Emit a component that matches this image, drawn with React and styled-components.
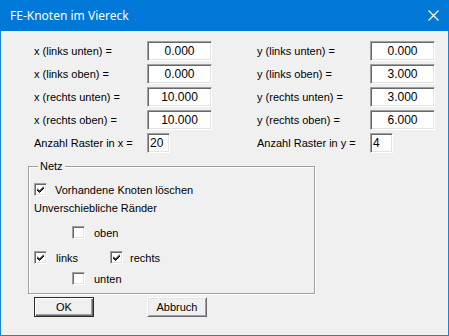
import React from "react";
import styled, { createGlobalStyle } from "styled-components";

const GlobalStyle = createGlobalStyle`
    body {
        margin: 0;
        background: #f0f0f0;
    }
`

const Window = styled.div`
    width: 449px;
    height: 336px;
    box-sizing: border-box;
    display: flex;
    flex-direction: column;
    background: #f0f0f0;
    border: 1px solid #1883d7;
    border-top: none;
    font-family: "Liberation Sans", Arial, sans-serif;
    font-size: 11px;
    color: #000;
`

const TitleBar = styled.div`
    height: 31px;
    flex: none;
    margin: 0 -1px;
    padding: 0 10px 0 10px;
    display: flex;
    align-items: center;
    justify-content: space-between;
    background: #0078d7;
    color: #fff;
    font-family: "Noto Sans", "Segoe UI", sans-serif;
    font-size: 12px;
`

const Title = styled.span`
    margin-top: -1px;
`

const Client = styled.div`
    padding: 10px 0 0 33px;
`

const Columns = styled.div`
    display: flex;
    gap: 45px;
`

const Column = styled.div`
    display: flex;
    flex-direction: column;
    gap: 3px;
`

const Row = styled.div`
    display: flex;
    align-items: center;
    height: 20px;
`

const Label = styled.span`
    width: 113px;
    flex: none;
`

const Field = styled.div`
    width: ${p => p.$w}px;
    height: 20px;
    box-sizing: border-box;
    display: flex;
    align-items: center;
    justify-content: ${p => (p.$left ? "flex-start" : "center")};
    padding: ${p => (p.$left ? "0 0 0 2px" : "0")};
    background: #fff;
    border: 1px solid;
    border-color: #a0a0a0 #fff #fff #a0a0a0;
    box-shadow: inset 1px 1px 0 #696969, inset -1px -1px 0 #e3e3e3;
    font-size: 12px;
`

const Group = styled.div`
    position: relative;
    margin: 13px 0 0 -6px;
    width: 287px;
    height: 128px;
    box-sizing: border-box;
    border: 1px solid #a0a0a0;
    box-shadow: inset 1px 1px 0 #fff, 1px 1px 0 #fff;
    padding: 16px 0 0 5px;
`

const GroupTitle = styled.span`
    position: absolute;
    top: -7px;
    left: 9px;
    padding: 0 2px;
    background: #f0f0f0;
`

const Check = styled.label`
    display: flex;
    align-items: center;
    gap: ${p => p.$gap || 8}px;
    height: 13px;
`

const Box = styled.span`
    width: 13px;
    height: 13px;
    box-sizing: border-box;
    flex: none;
    background: #fff;
    border: 1px solid;
    border-color: #a0a0a0 #fff #fff #a0a0a0;
    box-shadow: inset 1px 1px 0 #696969, inset -1px -1px 0 #e3e3e3;
    display: flex;
    align-items: center;
    justify-content: center;
`

const Caption = styled.div`
    margin-top: 6px;
    height: 13px;
    line-height: 13px;
`

const Edges = styled.div`
    margin-top: 11px;
    display: grid;
    grid-template-columns: 38px 38px auto;
    grid-template-rows: 25px 21px 13px;
    align-items: start;
`

const Cell = styled.div`
    grid-column: ${p => p.$col};
    grid-row: ${p => p.$row};
`

const Buttons = styled.div`
    margin-top: 3px;
    display: flex;
    gap: 53px;
`

const Button = styled.button`
    width: 60px;
    height: 20px;
    box-sizing: border-box;
    padding: 0;
    font-family: "Liberation Sans", Arial, sans-serif;
    font-size: 11px;
    color: #000;
    background: #f0f0f0;
    border: 1px solid;
    border-color: ${p => (p.$default ? "#2b2b2b" : "#fff #696969 #696969 #fff")};
    box-shadow: ${p =>
        p.$default
            ? "inset 1px 1px 0 #fff, inset -1px -1px 0 #696969, inset -2px -2px 0 #a0a0a0"
            : "inset 1px 1px 0 #e3e3e3, inset -1px -1px 0 #a0a0a0"};
`

function CheckBox({ checked, children, gap }) {
    return (
        <Check $gap={gap}>
            <Box>
                {checked && (
                    <svg width="7" height="7" viewBox="0 0 7 7">
                        <path d="M0 2.5 L2.5 5 L7 0.5 M0 3.5 L2.5 6 L7 1.5 M0 4 L2.5 6.5 L7 2" stroke="#000" strokeWidth="1" fill="none" />
                    </svg>
                )}
            </Box>
            <span>{children}</span>
        </Check>
    )
}

const xRows = [
    ["x (links unten) =", "0.000"],
    ["x (links oben) =", "0.000"],
    ["x (rechts unten) =", "10.000"],
    ["x (rechts oben) =", "10.000"],
]

const yRows = [
    ["y (links unten) =", "0.000"],
    ["y (links oben) =", "3.000"],
    ["y (rechts unten) =", "3.000"],
    ["y (rechts oben) =", "6.000"],
]

export default function App() {
    return (
        <>
            <GlobalStyle />
            <Window>
                <TitleBar>
                    <Title>FE-Knoten im Viereck</Title>
                    <svg width="11" height="11" viewBox="0 0 11 11">
                        <path d="M0.5 0.5 L10.5 10.5 M10.5 0.5 L0.5 10.5" stroke="#fff" strokeWidth="1.2" />
                    </svg>
                </TitleBar>
                <Client>
                    <Columns>
                        <Column>
                            {xRows.map(([l, v]) => (
                                <Row key={l}>
                                    <Label>{l}</Label>
                                    <Field $w={65}>{v}</Field>
                                </Row>
                            ))}
                            <Row>
                                <Label>Anzahl Raster in x =</Label>
                                <Field $w={23} $left>20</Field>
                            </Row>
                        </Column>
                        <Column>
                            {yRows.map(([l, v]) => (
                                <Row key={l}>
                                    <Label>{l}</Label>
                                    <Field $w={65}>{v}</Field>
                                </Row>
                            ))}
                            <Row>
                                <Label>Anzahl Raster in y =</Label>
                                <Field $w={23} $left>4</Field>
                            </Row>
                        </Column>
                    </Columns>
                    <Group>
                        <GroupTitle>Netz</GroupTitle>
                        <CheckBox checked>Vorhandene Knoten löschen</CheckBox>
                        <Caption>Unverschiebliche Ränder</Caption>
                        <Edges>
                            <Cell $col={2} $row={1}><CheckBox gap={9}>oben</CheckBox></Cell>
                            <Cell $col={1} $row={2}><CheckBox checked gap={9}>links</CheckBox></Cell>
                            <Cell $col={3} $row={2}><CheckBox checked gap={7}>rechts</CheckBox></Cell>
                            <Cell $col={2} $row={3}><CheckBox gap={9}>unten</CheckBox></Cell>
                        </Edges>
                    </Group>
                    <Buttons>
                        <Button $default>OK</Button>
                        <Button>Abbruch</Button>
                    </Buttons>
                </Client>
            </Window>
        </>
    )
}
